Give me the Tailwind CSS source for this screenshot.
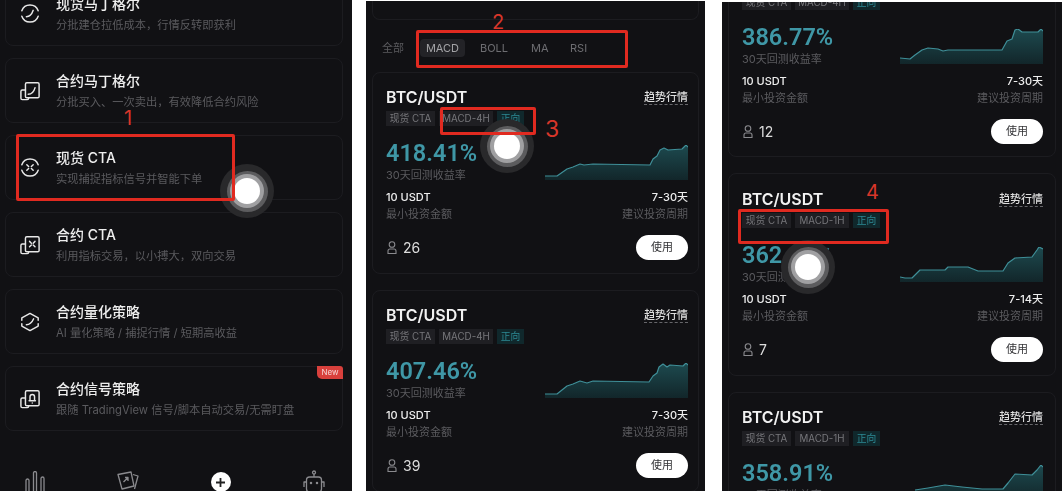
<!DOCTYPE html>
<html>
<head>
<meta charset="utf-8">
<script src="https://cdn.jsdelivr.net/npm/@tailwindcss/browser@4"></script>
</head>
<body class="bg-white">
<svg class="absolute w-0 h-0"><defs><linearGradient id="g" x1="0" y1="0" x2="0" y2="1"><stop offset="0" stop-color="#1d4a4f"/><stop offset="1" stop-color="#12262a"/></linearGradient></defs></svg>
<div class="relative flex w-[1064px] h-[491px] overflow-hidden bg-white font-['Inter','Noto_Sans_CJK_SC',sans-serif]">

  <!-- PANEL 1 -->
  <section class="-mt-[2px] w-[352px] h-[495px] overflow-hidden bg-[#111114] shrink-0 blur-[0.4px]">
    <div class="-mt-[17px] px-[5px] w-[348px] flex flex-col gap-[12px]">
      <div class="h-[65px] rounded-lg border border-[#1c1c20] flex items-center gap-[16px] pl-[14px]">
        <svg class="w-[20px] h-[21px] shrink-0" viewBox="0 0 22 22" fill="none" stroke="#e8e8e8" stroke-width="1.600" stroke-linecap="round"><path d="M2 8A9.500 9.500 0 0 1 20 8M20 14A9.500 9.500 0 0 1 2 14"/><path d="M7 14.500c3 0 6-2.500 7.500-7"/></svg>
        <div class="min-w-0 pt-[2px]"><p class="text-[14px] leading-[20px] font-medium text-[#eeeeee]">现货马丁格尔</p><p class="mt-[1px] text-[11.250px] leading-[20px] text-[#5a5a5e]">分批建仓拉低成本，行情反转即获利</p></div>
      </div>
      <div class="h-[65px] rounded-lg border border-[#1c1c20] flex items-center gap-[16px] pl-[14px]">
        <svg class="w-[20px] h-[20px] shrink-0" viewBox="0 0 22 22" fill="none" stroke="#e8e8e8" stroke-width="1.600" stroke-linecap="round" stroke-linejoin="round"><rect x="6" y="2" width="15" height="16.500" rx="1.500"/><path d="M6 10H2.500A1.500 1.500 0 0 0 1 11.500V19a1.500 1.500 0 0 0 1.500 1.500H8a1.500 1.500 0 0 0 1.500-1.500v-.5"/><path d="M9 14.500c3 0 6-1.500 7.500-7"/></svg>
        <div class="min-w-0 pt-[2px]"><p class="text-[14px] leading-[20px] font-medium text-[#eeeeee]">合约马丁格尔</p><p class="mt-[1px] text-[11.250px] leading-[20px] text-[#5a5a5e]">分批买入、一次卖出，有效降低合约风险</p></div>
      </div>
      <div class="h-[65px] rounded-lg border border-[#1c1c20] flex items-center gap-[16px] pl-[14px]">
        <svg class="w-[20px] h-[21px] shrink-0" viewBox="0 0 22 22" fill="none" stroke="#e8e8e8" stroke-width="1.600" stroke-linecap="round"><path d="M2 8A9.500 9.500 0 0 1 20 8M20 14A9.500 9.500 0 0 1 2 14"/><path d="M7.500 8l2 2M14.500 8l-2 2M7.500 14l2-2M14.500 14l-2-2"/></svg>
        <div class="min-w-0 pt-[2px]"><p class="text-[14px] leading-[20px] font-medium text-[#eeeeee]">现货 CTA</p><p class="mt-[1px] text-[11.250px] leading-[20px] text-[#5a5a5e]">实现捕捉指标信号并智能下单</p></div>
      </div>
      <div class="h-[65px] rounded-lg border border-[#1c1c20] flex items-center gap-[16px] pl-[14px]">
        <svg class="w-[20px] h-[20px] shrink-0" viewBox="0 0 22 22" fill="none" stroke="#e8e8e8" stroke-width="1.600" stroke-linecap="round" stroke-linejoin="round"><rect x="6" y="2" width="15" height="16.500" rx="1.500"/><path d="M6 10H2.500A1.500 1.500 0 0 0 1 11.500V19a1.500 1.500 0 0 0 1.500 1.500H8a1.500 1.500 0 0 0 1.500-1.500v-.5"/><path d="M10.500 7l2 2M16.500 7l-2 2M10.500 13l2-2M16.500 13l-2-2"/></svg>
        <div class="min-w-0 pt-[2px]"><p class="text-[14px] leading-[20px] font-medium text-[#eeeeee]">合约 CTA</p><p class="mt-[1px] text-[11.250px] leading-[20px] text-[#5a5a5e]">利用指标交易，以小搏大，双向交易</p></div>
      </div>
      <div class="h-[65px] rounded-lg border border-[#1c1c20] flex items-center gap-[16px] pl-[14px]">
        <svg class="w-[20px] h-[22px] shrink-0" viewBox="0 0 22 22" fill="none" stroke="#e8e8e8" stroke-width="1.600" stroke-linecap="round" stroke-linejoin="round"><path d="M2 9V6.500L11 1.500l9 5V9M20 13v2.500L11 20.500l-9-5V13"/><path d="M7 14c3 0 6-2 8-6.500"/></svg>
        <div class="min-w-0 pt-[2px]"><p class="text-[14px] leading-[20px] font-medium text-[#eeeeee]">合约量化策略</p><p class="mt-[1px] text-[11.250px] leading-[20px] text-[#5a5a5e]">AI 量化策略 / 捕捉行情 / 短期高收益</p></div>
      </div>
      <div class="relative h-[65px] rounded-lg border border-[#1c1c20] flex items-center gap-[16px] pl-[14px]">
        <svg class="w-[20px] h-[20px] shrink-0" viewBox="0 0 22 22" fill="none" stroke="#e8e8e8" stroke-width="1.600" stroke-linecap="round" stroke-linejoin="round"><rect x="6" y="2" width="15" height="16.500" rx="1.500"/><path d="M6 10H2.500A1.500 1.500 0 0 0 1 11.500V19a1.500 1.500 0 0 0 1.500 1.500H8a1.500 1.500 0 0 0 1.500-1.500v-.5"/><path d="M10 13h7M11 12.500V8.500a2.500 2.500 0 0 1 5 0v4M13.500 15.500h0"/></svg>
        <div class="min-w-0 pt-[2px]"><p class="text-[14px] leading-[20px] font-medium text-[#eeeeee]">合约信号策略</p><p class="mt-[1px] text-[11.250px] leading-[20px] text-[#5a5a5e]">跟随 TradingView 信号/脚本自动交易/无需盯盘</p></div>
        <span class="absolute -top-px -right-px h-[13px] w-[26px] rounded-tr-[3px] rounded-bl-[5px] bg-[#d8403c] text-center text-[8px] leading-[13px] text-[#f4d5d3]">New</span>
      </div>
    </div>
    <nav class="mt-[40px] -ml-[12px] w-[372px] grid grid-cols-4 justify-items-center items-start">
      <svg class="w-[20px] h-[20px]" viewBox="0 0 20 20" fill="none" stroke="#8a8a8e" stroke-width="1.300"><path d="M1 20V9.500a1.500 1.500 0 0 1 3 0V20M8.500 20V2a1.500 1.500 0 0 1 3 0V20M16 20V7.500a1.500 1.500 0 0 1 3 0V20"/></svg>
      <svg class="w-[22px] h-[20px]" viewBox="0 0 22 20" fill="none" stroke="#8a8a8e" stroke-width="1.300" stroke-linejoin="round"><path d="M1 3.500L14 1l3 14-12 3z"/><path d="M16 3.500l5 1.500-3.500 13"/><path d="M6.500 11l4-4M8 6.500h3V10"/></svg>
      <div class="mt-[1px] w-[20px] h-[20px] rounded-full bg-white flex items-center justify-center"><svg class="w-[9px] h-[9px]" viewBox="0 0 10 10" stroke="#222" stroke-width="2"><path d="M5 0v10M0 5h10"/></svg></div>
      <svg class="-mt-[1px] w-[22px] h-[22px]" viewBox="0 0 22 22" fill="none" stroke="#8a8a8e" stroke-width="1.300" stroke-linejoin="round"><circle cx="11" cy="2.500" r="1.500"/><path d="M11 4v3"/><rect x="3.500" y="7" width="15" height="15" rx="3"/><path d="M3.500 12H1v5M18.500 12H21v5"/><circle cx="8" cy="13" r=".6"/><circle cx="14" cy="13" r=".6"/></svg>
    </nav>
  </section>

  <!-- PANEL 2 -->
  <section class="ml-[14px] mt-px w-[339px] h-[492px] overflow-hidden bg-[#111114] shrink-0 blur-[0.4px]">
    <div class="mx-[6px] h-[19px] rounded-b-lg border border-t-0 border-[#1c1c20]"></div>
    <div class="h-[52px] pt-[4px] flex items-center pl-[16px] text-[11px] text-[#6d6d71]">
      <span class="w-[38px] text-[#5a5a5e]">全部</span>
      <span class="w-[45px] h-[18px] rounded bg-[#232327] text-center leading-[18px] text-[#a3a3a6]">MACD</span>
      <span class="ml-[15px] w-[51px]">BOLL</span>
      <span class="w-[39px]">MA</span>
      <span>RSI</span>
    </div>
    <div class="mx-[6px] flex flex-col gap-[16px]">
      <article class="h-[202px] rounded-lg border border-[#1c1c20] pt-[14px] pl-[13px] pr-[10px]">
        <div class="h-[20px] flex items-center justify-between"><span class="text-[16px] font-semibold text-[#f2f2f2]">BTC/USDT</span><span class="text-[11px] font-medium text-[#dddddd] border-b border-dashed border-[#66666a] leading-[14px]">趋势行情</span></div>
        <div class="mt-[4px] h-[15px] flex gap-[4px] text-[9.750px] leading-[15px]"><span class="w-[49px] text-center bg-[#1f1f23] text-[#77777b]">现货 CTA</span><span class="w-[54px] text-center bg-[#1f1f23] text-[#77777b]">MACD-4H</span><span class="w-[27px] text-center bg-[#10282c] text-[#2d8a95]">正向</span></div>
        <div class="mt-[12px] h-[44px] flex justify-between">
          <div><p class="font-['Roboto'] text-[23.500px] leading-[30px] font-semibold text-[#3f97a6]">418.41%</p><p class="text-[11px] leading-[14px] text-[#5a5a5e]">30天回测收益率</p></div>
          <svg class="mt-[7px] w-[143px] h-[35px]" viewBox="0 0 143 35"><path d="M0 31L12 31L22 24L28 22L35 19L39 20L48 19L105 20L108 14L112 11L115 5L119 3L123 5L137 4L141 0L143 2V35H0Z" fill="url(#g)"/><path d="M0 31L12 31L22 24L28 22L35 19L39 20L48 19L105 20L108 14L112 11L115 5L119 3L123 5L137 4L141 0L143 2" fill="none" stroke="#3f8f98" stroke-width="1.200" stroke-linejoin="round"/></svg>
        </div>
        <div class="mt-[7px] flex justify-between"><div><p class="text-[11px] leading-[16px] font-medium text-[#eeeeee]">10 USDT</p><p class="text-[11px] leading-[18px] text-[#5a5a5e]">最小投资金额</p></div><div class="text-right"><p class="text-[11px] leading-[16px] font-medium text-[#eeeeee]">7-30天</p><p class="text-[11px] leading-[18px] text-[#5a5a5e]">建议投资周期</p></div></div>
        <div class="mt-[12px] h-[25px] flex items-center justify-between"><div class="flex items-center gap-[6px] text-[14px] text-[#dddddd]"><svg class="ml-px w-[10px] h-[13px]" viewBox="0 0 10 13" fill="none" stroke="#8a8a8e" stroke-width="1.100"><circle cx="5" cy="3.500" r="2.800"/><path d="M1 12.500V10a2 2 0 0 1 2-2h4a2 2 0 0 1 2 2v2.500z"/></svg><span>26</span></div><span class="w-[52px] h-[25px] rounded-full bg-white text-center text-[11px] leading-[25px] text-[#333336]">使用</span></div>
      </article>
      <article class="h-[202px] rounded-lg border border-[#1c1c20] pt-[14px] pl-[13px] pr-[10px]">
        <div class="h-[20px] flex items-center justify-between"><span class="text-[16px] font-semibold text-[#f2f2f2]">BTC/USDT</span><span class="text-[11px] font-medium text-[#dddddd] border-b border-dashed border-[#66666a] leading-[14px]">趋势行情</span></div>
        <div class="mt-[4px] h-[15px] flex gap-[4px] text-[9.750px] leading-[15px]"><span class="w-[49px] text-center bg-[#1f1f23] text-[#77777b]">现货 CTA</span><span class="w-[54px] text-center bg-[#1f1f23] text-[#77777b]">MACD-4H</span><span class="w-[27px] text-center bg-[#10282c] text-[#2d8a95]">正向</span></div>
        <div class="mt-[12px] h-[44px] flex justify-between">
          <div><p class="font-['Roboto'] text-[23.500px] leading-[30px] font-semibold text-[#3f97a6]">407.46%</p><p class="text-[11px] leading-[14px] text-[#5a5a5e]">30天回测收益率</p></div>
          <svg class="mt-[7px] w-[143px] h-[35px]" viewBox="0 0 143 35"><path d="M0 31L12 31L22 23L28 21L35 18L42 20L48 18L104 19L108 13L112 10L114 4L118 1L122 4L125 2L138 3L141 0L143 2V35H0Z" fill="url(#g)"/><path d="M0 31L12 31L22 23L28 21L35 18L42 20L48 18L104 19L108 13L112 10L114 4L118 1L122 4L125 2L138 3L141 0L143 2" fill="none" stroke="#3f8f98" stroke-width="1.200" stroke-linejoin="round"/></svg>
        </div>
        <div class="mt-[7px] flex justify-between"><div><p class="text-[11px] leading-[16px] font-medium text-[#eeeeee]">10 USDT</p><p class="text-[11px] leading-[18px] text-[#5a5a5e]">最小投资金额</p></div><div class="text-right"><p class="text-[11px] leading-[16px] font-medium text-[#eeeeee]">7-30天</p><p class="text-[11px] leading-[18px] text-[#5a5a5e]">建议投资周期</p></div></div>
        <div class="mt-[12px] h-[25px] flex items-center justify-between"><div class="flex items-center gap-[6px] text-[14px] text-[#dddddd]"><svg class="ml-px w-[10px] h-[13px]" viewBox="0 0 10 13" fill="none" stroke="#8a8a8e" stroke-width="1.100"><circle cx="5" cy="3.500" r="2.800"/><path d="M1 12.500V10a2 2 0 0 1 2-2h4a2 2 0 0 1 2 2v2.500z"/></svg><span>39</span></div><span class="w-[52px] h-[25px] rounded-full bg-white text-center text-[11px] leading-[25px] text-[#333336]">使用</span></div>
      </article>
    </div>
  </section>

  <!-- PANEL 3 -->
  <section class="ml-[17px] mt-[2px] w-[340px] h-[491px] overflow-hidden bg-[#111114] shrink-0 blur-[0.4px]">
    <div class="mx-[6px] -mt-[46px] flex flex-col gap-[16px]">
      <article class="h-[201px] rounded-lg border border-[#1c1c20] pt-[14px] pl-[13px] pr-[12px]">
        <div class="h-[20px] flex items-center justify-between"><span class="text-[16px] font-semibold text-[#f2f2f2]">BTC/USDT</span><span class="text-[11px] font-medium text-[#dddddd] border-b border-dashed border-[#66666a] leading-[14px]">趋势行情</span></div>
        <div class="mt-[4px] h-[15px] flex gap-[4px] text-[9.750px] leading-[15px]"><span class="w-[49px] text-center bg-[#1f1f23] text-[#77777b]">现货 CTA</span><span class="w-[54px] text-center bg-[#1f1f23] text-[#77777b]">MACD-4H</span><span class="w-[27px] text-center bg-[#10282c] text-[#2d8a95]">正向</span></div>
        <div class="mt-[12px] h-[44px] flex justify-between">
          <div><p class="font-['Roboto'] text-[23.500px] leading-[30px] font-semibold text-[#3f97a6]">386.77%</p><p class="text-[11px] leading-[14px] text-[#5a5a5e]">30天回测收益率</p></div>
          <svg class="mt-[7px] w-[143px] h-[35px]" viewBox="0 0 143 35"><path d="M0 29L10 30L15 26L22 21L28 19L38 20L43 22L48 21L102 21L107 12L112 10L115 1L118 0L122 3L138 3L141 0L143 2V35H0Z" fill="url(#g)"/><path d="M0 29L10 30L15 26L22 21L28 19L38 20L43 22L48 21L102 21L107 12L112 10L115 1L118 0L122 3L138 3L141 0L143 2" fill="none" stroke="#3f8f98" stroke-width="1.200" stroke-linejoin="round"/></svg>
        </div>
        <div class="mt-[7px] flex justify-between"><div><p class="text-[11px] leading-[16px] font-medium text-[#eeeeee]">10 USDT</p><p class="text-[11px] leading-[18px] text-[#5a5a5e]">最小投资金额</p></div><div class="text-right"><p class="text-[11px] leading-[16px] font-medium text-[#eeeeee]">7-30天</p><p class="text-[11px] leading-[18px] text-[#5a5a5e]">建议投资周期</p></div></div>
        <div class="mt-[12px] h-[25px] flex items-center justify-between"><div class="flex items-center gap-[6px] text-[14px] text-[#dddddd]"><svg class="ml-px w-[10px] h-[13px]" viewBox="0 0 10 13" fill="none" stroke="#8a8a8e" stroke-width="1.100"><circle cx="5" cy="3.500" r="2.800"/><path d="M1 12.500V10a2 2 0 0 1 2-2h4a2 2 0 0 1 2 2v2.500z"/></svg><span>12</span></div><span class="w-[52px] h-[25px] rounded-full bg-white text-center text-[11px] leading-[25px] text-[#333336]">使用</span></div>
      </article>
      <article class="h-[203px] rounded-lg border border-[#1c1c20] pt-[15px] pl-[13px] pr-[12px]">
        <div class="h-[20px] flex items-center justify-between"><span class="text-[16px] font-semibold text-[#f2f2f2]">BTC/USDT</span><span class="text-[11px] font-medium text-[#dddddd] border-b border-dashed border-[#66666a] leading-[14px]">趋势行情</span></div>
        <div class="mt-[4px] h-[15px] flex gap-[4px] text-[9.750px] leading-[15px]"><span class="w-[49px] text-center bg-[#1f1f23] text-[#77777b]">现货 CTA</span><span class="w-[54px] text-center bg-[#1f1f23] text-[#77777b]">MACD-1H</span><span class="w-[27px] text-center bg-[#10282c] text-[#2d8a95]">正向</span></div>
        <div class="mt-[12px] h-[44px] flex justify-between">
          <div><p class="font-['Roboto'] text-[23.500px] leading-[30px] font-semibold text-[#3f97a6]">362.04%</p><p class="text-[11px] leading-[14px] text-[#5a5a5e]">30天回测收益率</p></div>
          <svg class="mt-[7px] w-[143px] h-[35px]" viewBox="0 0 143 35"><path d="M0 30L5 31L12 31L20 23L28 23L45 23L48 20L68 20L78 24L103 24L108 16L115 11L132 10L137 3L139 0L143 2V35H0Z" fill="url(#g)"/><path d="M0 30L5 31L12 31L20 23L28 23L45 23L48 20L68 20L78 24L103 24L108 16L115 11L132 10L137 3L139 0L143 2" fill="none" stroke="#3f8f98" stroke-width="1.200" stroke-linejoin="round"/></svg>
        </div>
        <div class="mt-[7px] flex justify-between"><div><p class="text-[11px] leading-[16px] font-medium text-[#eeeeee]">10 USDT</p><p class="text-[11px] leading-[18px] text-[#5a5a5e]">最小投资金额</p></div><div class="text-right"><p class="text-[11px] leading-[16px] font-medium text-[#eeeeee]">7-14天</p><p class="text-[11px] leading-[18px] text-[#5a5a5e]">建议投资周期</p></div></div>
        <div class="mt-[12px] h-[25px] flex items-center justify-between"><div class="flex items-center gap-[6px] text-[14px] text-[#dddddd]"><svg class="ml-px w-[10px] h-[13px]" viewBox="0 0 10 13" fill="none" stroke="#8a8a8e" stroke-width="1.100"><circle cx="5" cy="3.500" r="2.800"/><path d="M1 12.500V10a2 2 0 0 1 2-2h4a2 2 0 0 1 2 2v2.500z"/></svg><span>7</span></div><span class="w-[52px] h-[25px] rounded-full bg-white text-center text-[11px] leading-[25px] text-[#333336]">使用</span></div>
      </article>
      <article class="h-[202px] rounded-lg border border-[#1c1c20] pt-[14px] pl-[13px] pr-[12px]">
        <div class="h-[20px] flex items-center justify-between"><span class="text-[16px] font-semibold text-[#f2f2f2]">BTC/USDT</span><span class="text-[11px] font-medium text-[#dddddd] border-b border-dashed border-[#66666a] leading-[14px]">趋势行情</span></div>
        <div class="mt-[4px] h-[15px] flex gap-[4px] text-[9.750px] leading-[15px]"><span class="w-[49px] text-center bg-[#1f1f23] text-[#77777b]">现货 CTA</span><span class="w-[54px] text-center bg-[#1f1f23] text-[#77777b]">MACD-1H</span><span class="w-[27px] text-center bg-[#10282c] text-[#2d8a95]">正向</span></div>
        <div class="mt-[12px] h-[44px] flex justify-between">
          <div><p class="font-['Roboto'] text-[23.500px] leading-[30px] font-semibold text-[#3f97a6]">358.91%</p><p class="text-[11px] leading-[14px] text-[#5a5a5e]">30天回测收益率</p></div>
          <svg class="mt-[7px] w-[143px] h-[35px]" viewBox="0 0 143 35"><path d="M15 35V25L28 23L45 20L62 22L82 24L103 24L108 18L115 9L132 10L137 5L141 0L143 2V35Z" fill="url(#g)"/><path d="M15 25L28 23L45 20L62 22L82 24L103 24L108 18L115 9L132 10L137 5L141 0L143 2" fill="none" stroke="#3f8f98" stroke-width="1.200" stroke-linejoin="round"/></svg>
        </div>
      </article>
    </div>
  </section>

  <!-- Touch indicators -->
  <div class="absolute left-[220px] top-[164px] w-[54px] h-[54px] rounded-full bg-[#29292b] flex items-center justify-center blur-[0.4px]"><div class="w-[41px] h-[41px] rounded-full bg-[#5c5c5e] flex items-center justify-center"><div class="w-[34px] h-[34px] rounded-full bg-[#a0a0a2] flex items-center justify-center"><div class="w-[26px] h-[26px] rounded-full bg-white"></div></div></div></div>
  <div class="absolute left-[480px] top-[119px] w-[54px] h-[54px] rounded-full bg-[#29292b] flex items-center justify-center blur-[0.4px]"><div class="w-[41px] h-[41px] rounded-full bg-[#5c5c5e] flex items-center justify-center"><div class="w-[34px] h-[34px] rounded-full bg-[#a0a0a2] flex items-center justify-center"><div class="w-[26px] h-[26px] rounded-full bg-white"></div></div></div></div>
  <div class="absolute left-[781px] top-[240px] w-[54px] h-[54px] rounded-full bg-[#29292b] flex items-center justify-center blur-[0.4px]"><div class="w-[41px] h-[41px] rounded-full bg-[#5c5c5e] flex items-center justify-center"><div class="w-[34px] h-[34px] rounded-full bg-[#a0a0a2] flex items-center justify-center"><div class="w-[26px] h-[26px] rounded-full bg-white"></div></div></div></div>

  <!-- Annotations over the screenshots -->
  <div class="absolute left-[16px] top-[134px] w-[219px] h-[67px] rounded-[2px] border-[3px] border-[#e02a20] blur-[0.4px]"></div>
  <div class="absolute left-[416px] top-[30px] w-[212px] h-[38px] rounded-[2px] border-[3px] border-[#e02a20] blur-[0.4px]"></div>
  <div class="absolute left-[440px] top-[107px] w-[96px] h-[28px] rounded-[2px] border-[3px] border-[#e02a20] blur-[0.4px]"></div>
  <div class="absolute left-[738px] top-[209px] w-[151px] h-[35px] rounded-[2px] border-[3px] border-[#e02a20] blur-[0.4px]"></div>
  <span class="absolute left-[124px] top-[110px] text-[20px] leading-[16px] text-[#d8362a]">1</span>
  <span class="absolute left-[492px] top-[14px] text-[20px] leading-[16px] text-[#d8362a]">2</span>
  <span class="absolute left-[545px] top-[121px] text-[23px] leading-[16px] text-[#d8362a]">3</span>
  <span class="absolute left-[866px] top-[184px] text-[20px] leading-[16px] text-[#d8362a]">4</span>
</div>
</body>
</html>
